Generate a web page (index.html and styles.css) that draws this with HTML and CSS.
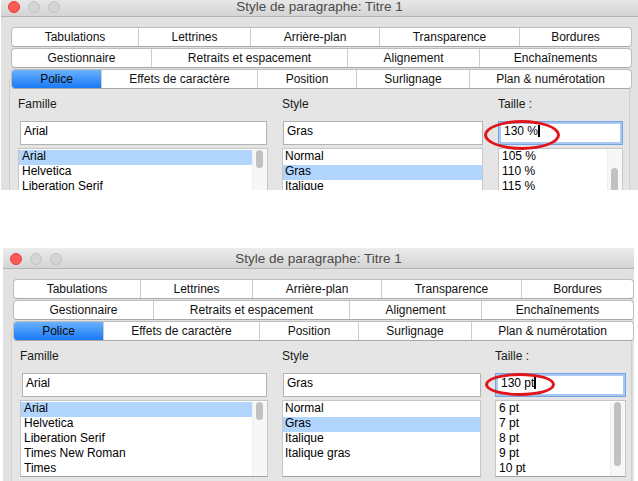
FILE: index.html
```html
<!DOCTYPE html>
<html lang="fr">
<head>
<meta charset="utf-8">
<title>Style de paragraphe</title>
<link rel="stylesheet" href="styles.css">
</head>
<body>
<div class="shot shot-top">
  <div class="window">
    <div class="titlebar">
      <div class="lights"><span class="light red"></span><span class="light"></span><span class="light"></span></div>
      <div class="title">Style de paragraphe: Titre 1</div>
      <div></div>
    </div>
    <div class="tabs">
      <div class="tabrow r1"><div class="tab">Tabulations</div><div class="tab">Lettrines</div><div class="tab">Arrière-plan</div><div class="tab">Transparence</div><div class="tab">Bordures</div></div>
      <div class="tabrow r2"><div class="tab">Gestionnaire</div><div class="tab">Retraits et espacement</div><div class="tab">Alignement</div><div class="tab">Enchaînements</div></div>
      <div class="tabrow r3"><div class="tab on">Police</div><div class="tab">Effets de caractère</div><div class="tab">Position</div><div class="tab">Surlignage</div><div class="tab">Plan &amp; numérotation</div></div>
    </div>
    <div class="panel">
      <div class="col c1">
        <div class="label">Famille</div>
        <div class="field f1">Arial</div>
        <div class="list">
          <div class="items"><div class="item sel">Arial</div><div class="item">Helvetica</div><div class="item">Liberation Serif</div><div class="item">Times New Roman</div><div class="item">Times</div></div>
          <div class="sb"><div class="thumb th-fam"></div></div>
        </div>
      </div>
      <div class="col c2">
        <div class="label">Style</div>
        <div class="field f2">Gras</div>
        <div class="list l2">
          <div class="items"><div class="item">Normal</div><div class="item sel">Gras</div><div class="item">Italique</div><div class="item">Italique gras</div></div>
        </div>
      </div>
      <div class="col c3">
        <div class="label">Taille :</div>
        <div class="field focus">130 %<span class="caret"></span></div>
        <div class="list">
          <div class="items"><div class="item">105 %</div><div class="item">110 %</div><div class="item">115 %</div><div class="item">120 %</div><div class="item">130 %</div></div>
          <div class="sb"><div class="thumb th-size-top"></div></div>
        </div>
      </div>
    </div>
    <div class="ring ring-top"></div>
  </div>
</div>

<div class="shot shot-bottom">
  <div class="window">
    <div class="titlebar">
      <div class="lights"><span class="light red"></span><span class="light"></span><span class="light"></span></div>
      <div class="title">Style de paragraphe: Titre 1</div>
      <div></div>
    </div>
    <div class="tabs">
      <div class="tabrow r1"><div class="tab">Tabulations</div><div class="tab">Lettrines</div><div class="tab">Arrière-plan</div><div class="tab">Transparence</div><div class="tab">Bordures</div></div>
      <div class="tabrow r2"><div class="tab">Gestionnaire</div><div class="tab">Retraits et espacement</div><div class="tab">Alignement</div><div class="tab">Enchaînements</div></div>
      <div class="tabrow r3"><div class="tab on">Police</div><div class="tab">Effets de caractère</div><div class="tab">Position</div><div class="tab">Surlignage</div><div class="tab">Plan &amp; numérotation</div></div>
    </div>
    <div class="panel">
      <div class="col c1">
        <div class="label">Famille</div>
        <div class="field f1">Arial</div>
        <div class="list">
          <div class="items"><div class="item sel">Arial</div><div class="item">Helvetica</div><div class="item">Liberation Serif</div><div class="item">Times New Roman</div><div class="item">Times</div></div>
          <div class="sb"><div class="thumb th-fam"></div></div>
        </div>
      </div>
      <div class="col c2">
        <div class="label">Style</div>
        <div class="field f2">Gras</div>
        <div class="list l2">
          <div class="items"><div class="item">Normal</div><div class="item sel">Gras</div><div class="item">Italique</div><div class="item">Italique gras</div></div>
        </div>
      </div>
      <div class="col c3">
        <div class="label">Taille :</div>
        <div class="field focus">130 pt<span class="caret"></span></div>
        <div class="list">
          <div class="items"><div class="item">6 pt</div><div class="item">7 pt</div><div class="item">8 pt</div><div class="item">9 pt</div><div class="item">10 pt</div></div>
          <div class="sb"><div class="thumb th-size-bot"></div></div>
        </div>
      </div>
    </div>
    <div class="ring ring-bot"></div>
  </div>
</div>
</body>
</html>
```

FILE: styles.css
```css
html, body {
  margin: 0;
  padding: 0;
}
body {
  width: 638px;
  height: 481px;
  overflow: hidden;
  background: #ffffff;
  font-family: "Liberation Sans", Arial, sans-serif;
  font-size: 12px;
  color: #000;
}

.shot {
  overflow: hidden;
}
.shot-top {
  width: 637px;
  height: 190px;
  margin-left: 1px;
}
.shot-bottom {
  width: 631px;
  height: 233px;
  margin-top: 58px;
  margin-left: 3px;
}

.window {
  position: relative;
  height: 270px;
  background: #e1e1e1;
}
.shot-top .window {
  margin-top: -4px;
}

/* title bar */
.titlebar {
  height: 21px;
  box-sizing: border-box;
  border-bottom: 1px solid #b4b4b4;
  background: linear-gradient(#ececec, #d4d4d4);
  display: grid;
  grid-template-columns: 1fr auto 1fr;
  align-items: center;
}
.lights {
  display: flex;
  gap: 8px;
  padding-left: 7px;
  padding-top: 1px;
}
.light {
  width: 12px;
  height: 12px;
  box-sizing: border-box;
  border-radius: 50%;
  background: #d5d5d5;
  border: 1px solid #c3c3c3;
}
.light.red {
  background: #fc5b55;
  border-color: #e2433d;
}
.title {
  font-size: 13.5px;
  color: #4b4b4b;
  padding-top: 1px;
  white-space: nowrap;
}

/* segmented tab rows */
.tabs {
  position: relative;
  z-index: 1;
  width: 621px;
  margin: 10px 0 0 10px;
  display: flex;
  flex-direction: column;
  gap: 1px;
}
.tabrow {
  display: grid;
  height: 20px;
  box-sizing: border-box;
  border: 1px solid #bdbdbd;
  border-bottom-color: #a8a8a8;
  border-radius: 4px;
  background: #ffffff;
  overflow: hidden;
}
.r1 { grid-template-columns: 126px 112px 129px 140px 1fr; }
.r2 { grid-template-columns: 139px 196px 132px 1fr; }
.r3 { grid-template-columns: 89px 156px 99px 113px 1fr; }
.tab {
  display: flex;
  align-items: center;
  justify-content: center;
  border-left: 1px solid #cdcdcd;
  white-space: nowrap;
  color: #111;
}
.tab:first-child {
  border-left: none;
}
.tab.on {
  background: linear-gradient(#69b1fd, #1a7af5);
  color: #0a0a0a;
}

/* tab page */
.panel {
  width: 621px;
  height: 200px;
  box-sizing: border-box;
  margin: -10px 0 0 8px;
  border: 1px solid #d0d0d0;
  background: #e5e5e5;
  padding: 17px 0 0 8px;
  display: flex;
  gap: 14px;
}
.col {
  display: flex;
  flex-direction: column;
}
.shot-top .c1 { width: 250px; }
.shot-top .c2 { width: 202px; }
.shot-top .c3 { width: 125px; }
.shot-bottom .c1 { width: 248px; }
.shot-bottom .c2 { width: 200px; }
.shot-bottom .c3 { width: 131px; margin-left: -1px; }

.label {
  height: 14px;
  line-height: 14px;
  padding-left: 0;
  color: #1a1a1a;
}
.field {
  margin-top: 10px;
  height: 24px;
  box-sizing: border-box;
  border: 1px solid #b3b3b3;
  background: #ffffff;
  padding: 2px 0 0 3px;
  line-height: 14px;
  white-space: nowrap;
}
.f1 { margin-left: 2px; margin-right: 1px; }
.f2 { margin-left: 1px; margin-right: 1px; }
.field.focus {
  border: 1px solid #74a3e2;
  box-shadow: inset 0 0 0 2px #a9c8f2;
  padding-left: 5px;
}
.caret {
  display: inline-block;
  width: 2px;
  height: 12px;
  background: #000;
  vertical-align: -2px;
  margin-left: 0;
}

.list {
  margin-top: 3px;
  height: 77px;
  box-sizing: border-box;
  border: 1px solid #c6c6c6;
  border-bottom-color: #a2a2a2;
  background: #ffffff;
  padding-top: 1px;
  display: flex;
  overflow: hidden;
}
.l2 { margin-right: 1px; }
.items {
  flex: 1;
  min-width: 0;
}
.item {
  height: 15px;
  line-height: 13px;
  padding-left: 3px;
  white-space: nowrap;
}
.l2 .item { padding-left: 2px; }
.item.sel {
  background: #b1d5fc;
}
.sb {
  width: 15px;
  flex: none;
  background: #f7f7f7;
  border-left: 1px solid #ededed;
  box-sizing: border-box;
}
.thumb {
  width: 7px;
  margin-left: 3px;
  border-radius: 4px;
  background: #c1c1c1;
}
.th-fam { height: 18px; }
.th-size-top { height: 24px; margin-top: 18px; }
.th-size-bot { height: 64px; }

/* annotation rings */
.ring {
  position: absolute;
  z-index: 2;
  box-sizing: border-box;
  border: 3px solid #e2141b;
  border-radius: 50%;
}
.ring-top {
  left: 483px;
  top: 124px;
  width: 76px;
  height: 30px;
}
.ring-bot {
  left: 482px;
  top: 125px;
  width: 70px;
  height: 23px;
}
```
